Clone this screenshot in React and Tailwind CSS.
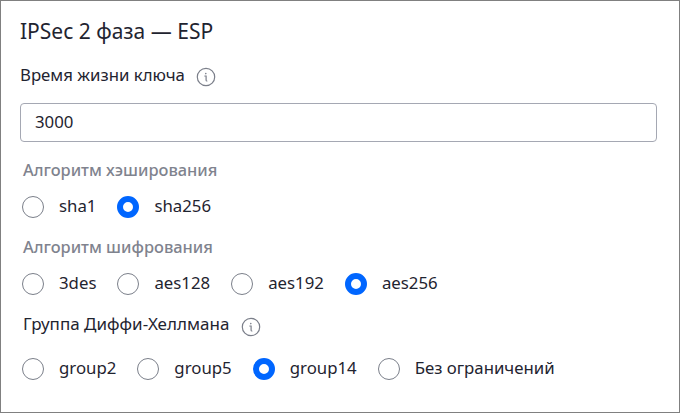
const FONT = "font-['Noto_Sans',sans-serif]";

function Info() {
  return (
    <svg width="20" height="20" viewBox="0 0 20 20" fill="none" className="shrink-0">
      <circle cx="10" cy="10" r="8.7" stroke="#7b7f8a" strokeWidth="1.2" />
      <path d="M8.8 9h1.3v4.2c0 .6.3.8.8.8" stroke="#7b7f8a" strokeWidth="1.2" strokeLinecap="round" fill="none" />
      <circle cx="9.8" cy="6.6" r="0.8" fill="#7b7f8a" />
    </svg>
  );
}

function Radio({ label, checked }) {
  return (
    <label className="flex items-center h-[22px] mr-[21px]">
      {checked ? (
        <span className="box-border w-[22px] h-[22px] rounded-full border-[6.5px] border-[#0066ff] bg-white shrink-0" />
      ) : (
        <span className="box-border w-[22px] h-[22px] rounded-full border border-[#7b7f8a] bg-white shrink-0" />
      )}
      <span className="ml-[15px] pb-[2px] text-[16.8px] leading-[22px] text-[#1f2430]">{label}</span>
    </label>
  );
}

function RadioRow({ items, className }) {
  return (
    <div className={`flex items-center h-[22px] pl-[2px] ${className}`}>
      {items.map((it) => (
        <Radio key={it.label} {...it} />
      ))}
    </div>
  );
}

export default function App() {
  return (
    <div className={`box-border w-[680px] h-[413px] border border-[#808080] bg-white px-[19px] overflow-hidden ${FONT}`}>
      <h1 className="mt-[17px] text-[21px] leading-[26px] font-normal text-[#1f2430]">IPSec 2 фаза — ESP</h1>
      <div className="mt-[19px] flex items-center gap-[11px] h-[24px]">
        <span className="text-[16.8px] leading-[22px] text-[#1f2430]">Время жизни ключа</span>
        <span className="mt-[4px]"><Info /></span>
      </div>
      <div className="mt-[16px] box-border h-[39px] w-[637px] rounded-[4px] border border-[#a5a8b3] flex items-center pl-[14px] pb-[2px] text-[16.8px] text-[#1f2430]">3000</div>
      <div className="mt-[17px] pl-[3px] text-[16.4px] leading-[22px] font-medium text-[#7f838e]">Алгоритм хэширования</div>
      <RadioRow className="mt-[15px]" items={[{ label: "sha1" }, { label: "sha256", checked: true }]} />
      <div className="mt-[18px] pl-[3px] text-[16.4px] leading-[22px] font-medium text-[#7f838e]">Алгоритм шифрования</div>
      <RadioRow className="mt-[15px]" items={[{ label: "3des" }, { label: "aes128" }, { label: "aes192" }, { label: "aes256", checked: true }]} />
      <div className="mt-[17px] pl-[3px] flex items-center gap-[12px] h-[24px]">
        <span className="text-[17px] leading-[22px] text-[#1f2430]">Группа Диффи-Хеллмана</span>
        <span className="mt-[6px]"><Info /></span>
      </div>
      <RadioRow className="mt-[22px]" items={[{ label: "group2" }, { label: "group5" }, { label: "group14", checked: true }, { label: "Без ограничений" }]} />
    </div>
  );
}
